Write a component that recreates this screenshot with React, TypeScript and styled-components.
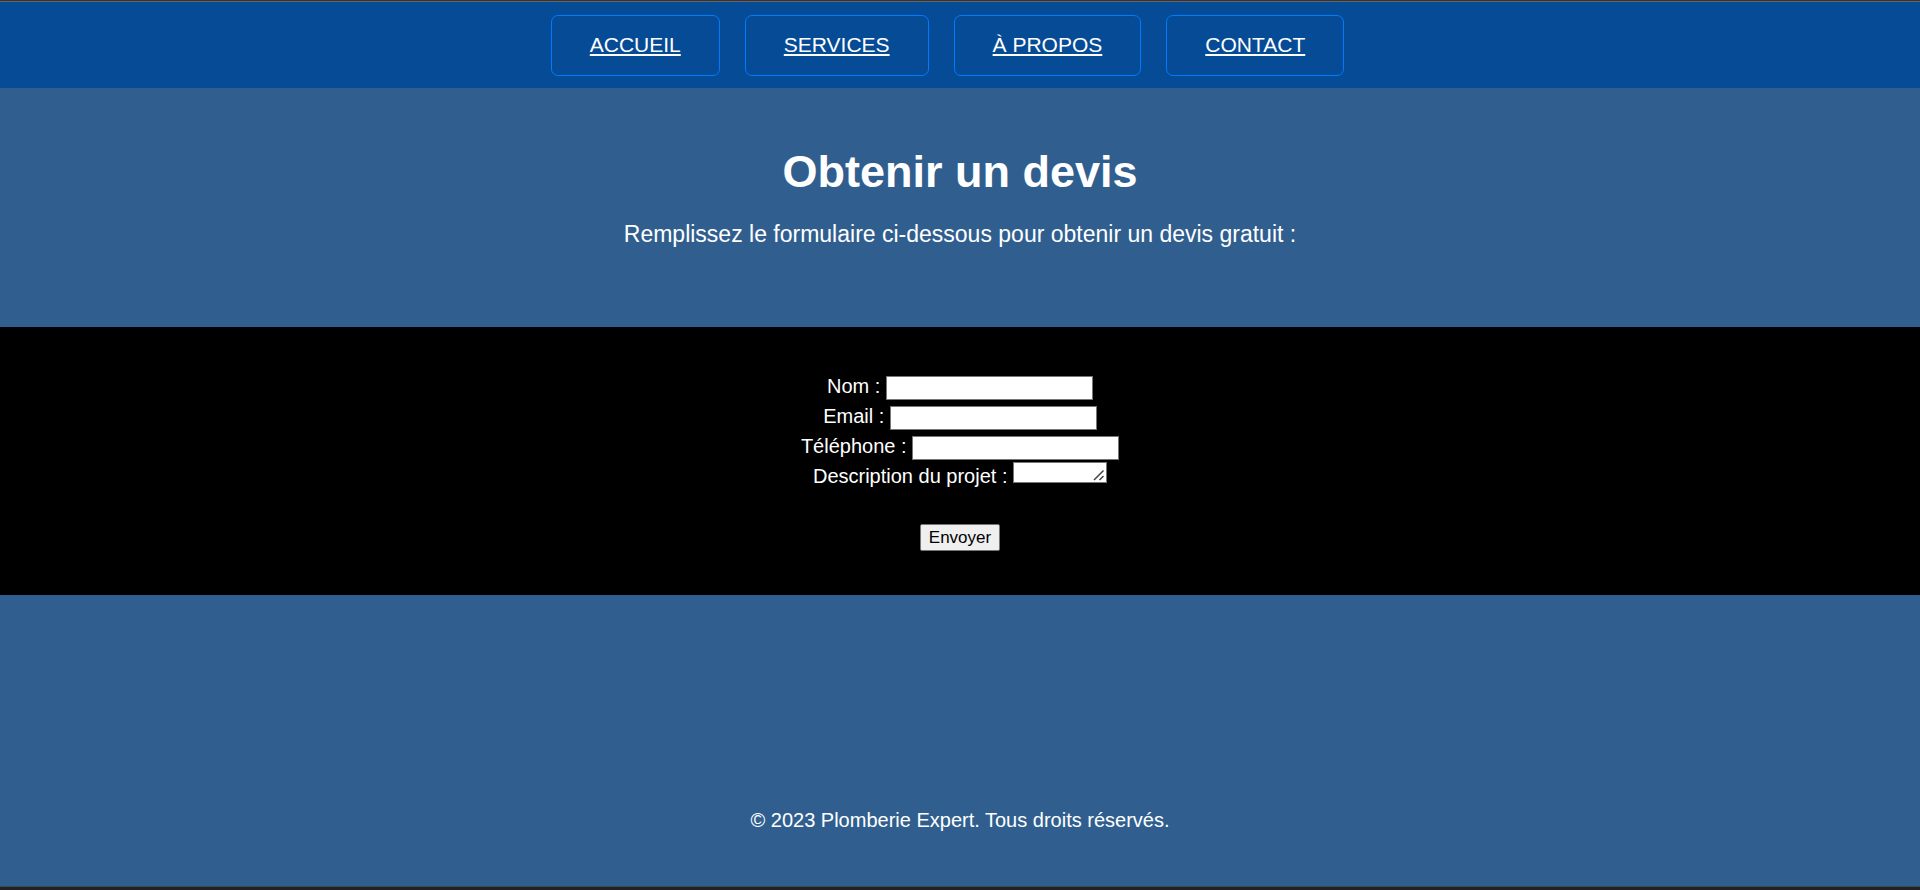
import React from 'react';
import styled, { createGlobalStyle } from 'styled-components';

const GlobalStyle = createGlobalStyle`
  * {
    box-sizing: border-box;
  }

  body {
    margin: 0;
    background: #305f8f;
    color: #fff;
    font-family: "Liberation Sans", Arial, sans-serif;
    font-size: 20px;
    line-height: 30px;
  }
`;

const Page = styled.div`
  display: flex;
  flex-direction: column;
  min-height: 100vh;
  border-top: 1px solid #333;
  border-bottom: 3px solid #1c2427;
`;

const NavBar = styled.nav`
  border-top: 1px solid #666;
  padding: 13px 0 12px;
  background: #054b96;
`;

const NavList = styled.ul`
  display: flex;
  justify-content: center;
  flex-wrap: wrap;
  margin: 0;
  padding: 0;
  list-style: none;
`;

const NavItem = styled.li`
  display: flex;
  margin-right: 25px;
`;

const NavLink = styled.a`
  padding: 14px 38px 15px;
  border: 1px solid #007bff;
  border-radius: 7px;
  color: #fff;
  font-size: 21px;
  text-transform: uppercase;
  text-decoration: underline;
`;

const Hero = styled.header`
  padding: 50px 20px 77px;
  text-align: center;
`;

const Title = styled.h1`
  margin: 0 0 13px;
  font-size: 45px;
  line-height: 68px;
`;

const Intro = styled.p`
  margin: 0;
  font-size: 23px;
  line-height: 31px;
`;

const QuoteForm = styled.form`
  padding: 44px 20px;
  background: #000;
  text-align: center;
`;

const Field = styled.div`
  height: 30px;
`;

const TextInput = styled.input`
  width: 207px;
  height: 24px;
  padding: 1px 2px;
  border: 1px solid #767676;
  background: #fff;
  font-family: inherit;
  font-size: 17px;
`;

const ProjectInput = styled.textarea`
  width: 94px;
  height: 21px;
  padding: 2px;
  border: 1px solid #767676;
  background: #fff;
  font-family: inherit;
  font-size: 17px;
  line-height: 17px;
  vertical-align: baseline;

  &::-webkit-resizer {
    background: url("data:image/svg+xml,%3Csvg xmlns='http://www.w3.org/2000/svg' width='15' height='15'%3E%3Cpath d='M3 13l9.500-9.500M8.500 13l4-4' stroke='%23444' stroke-width='1.5' fill='none'/%3E%3C/svg%3E") no-repeat right bottom;
  }
`;

const SubmitButton = styled.button`
  display: block;
  height: 27px;
  margin: 33px auto 0;
  padding: 0 8px;
  border: 1px solid #767676;
  border-radius: 2px;
  background: #efefef;
  color: #000;
  font-family: inherit;
  font-size: 17px;
  line-height: 24px;
`;

const Footer = styled.footer`
  margin-top: auto;
  padding: 50px 20px 51px;
  border-bottom: 1px solid #484848;
  text-align: center;
`;

const links = [
  { label: 'Accueil', href: '#accueil' },
  { label: 'Services', href: '#services' },
  { label: 'À propos', href: '#a-propos' },
  { label: 'Contact', href: '#contact' },
];

const fields = [
  { id: 'nom', label: 'Nom :', type: 'text' },
  { id: 'email', label: 'Email :', type: 'email' },
  { id: 'telephone', label: 'Téléphone :', type: 'tel' },
];

export default function App() {
  return (
    <>
      <GlobalStyle />
      <Page>
        <NavBar>
          <NavList>
            {links.map((link) => (
              <NavItem key={link.href}>
                <NavLink href={link.href}>{link.label}</NavLink>
              </NavItem>
            ))}
          </NavList>
        </NavBar>
        <Hero>
          <Title>Obtenir un devis</Title>
          <Intro>Remplissez le formulaire ci-dessous pour obtenir un devis gratuit :</Intro>
        </Hero>
        <QuoteForm>
          {fields.map((field) => (
            <Field key={field.id}>
              <label htmlFor={field.id}>{field.label}</label>{' '}
              <TextInput id={field.id} name={field.id} type={field.type} />
            </Field>
          ))}
          <Field>
            <label htmlFor="description">Description du projet :</label>{' '}
            <ProjectInput id="description" name="description" />
          </Field>
          <SubmitButton type="submit">Envoyer</SubmitButton>
        </QuoteForm>
        <Footer>© 2023 Plomberie Expert. Tous droits réservés.</Footer>
      </Page>
    </>
  );
}
